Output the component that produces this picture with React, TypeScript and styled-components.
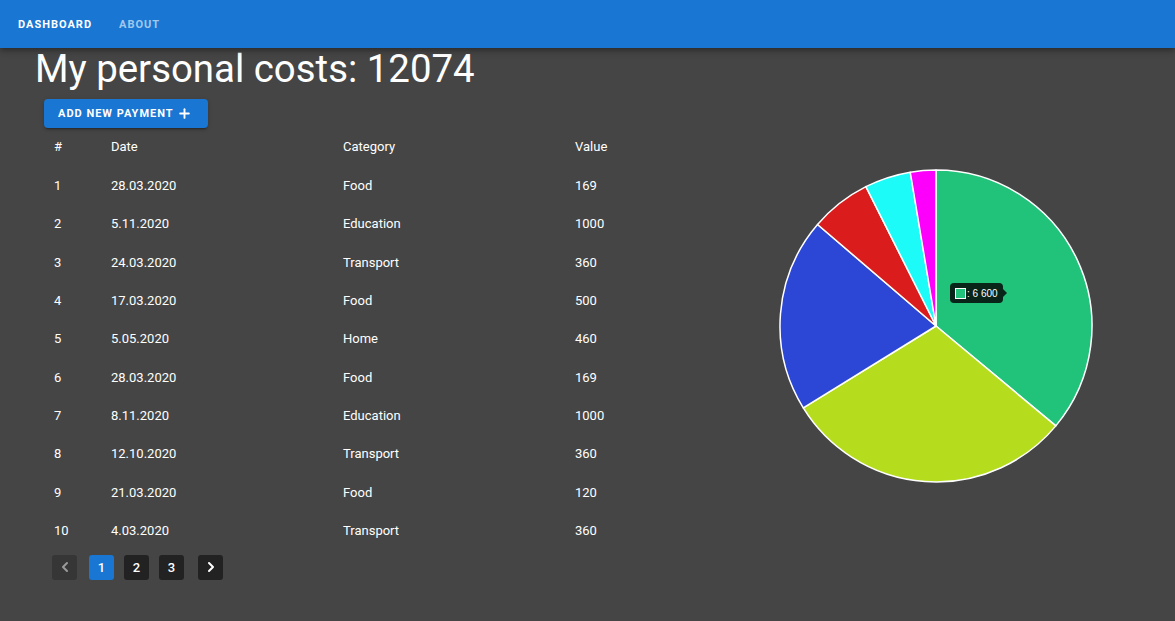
import React from "react";
import styled, { createGlobalStyle } from "styled-components";
import { ChevronLeft, ChevronRight, Plus } from "lucide-react";

const rows = [
  { id: 1, date: "28.03.2020", category: "Food", value: 169 },
  { id: 2, date: "5.11.2020", category: "Education", value: 1000 },
  { id: 3, date: "24.03.2020", category: "Transport", value: 360 },
  { id: 4, date: "17.03.2020", category: "Food", value: 500 },
  { id: 5, date: "5.05.2020", category: "Home", value: 460 },
  { id: 6, date: "28.03.2020", category: "Food", value: 169 },
  { id: 7, date: "8.11.2020", category: "Education", value: 1000 },
  { id: 8, date: "12.10.2020", category: "Transport", value: 360 },
  { id: 9, date: "21.03.2020", category: "Food", value: 120 },
  { id: 10, date: "4.03.2020", category: "Transport", value: 360 },
];

const slices = [
  { value: 6600, color: "#21c27a" },
  { value: 5517, color: "#b5dd1e" },
  { value: 3676, color: "#2c47d6" },
  { value: 1154, color: "#da1c1c" },
  { value: 875, color: "#1cfbf8" },
  { value: 483, color: "#fc00fc" },
];

const GlobalStyle = createGlobalStyle`
  body {
    margin: 0;
    background: #454545;
    font-family: Roboto, "Liberation Sans", sans-serif;
    color: #fff;
  }
`;

const Page = styled.div`
  min-height: 621px;
  background: #454545;
`;

const AppBar = styled.header`
  height: 48px;
  background: #1976d2;
  display: flex;
  align-items: center;
  padding-left: 18px;
  gap: 27px;
  box-shadow: 0 2px 4px -1px rgba(0, 0, 0, 0.2), 0 4px 5px 0 rgba(0, 0, 0, 0.14),
    0 1px 10px 0 rgba(0, 0, 0, 0.12);
  position: relative;
  z-index: 1;
`;

const Tab = styled.div<{ active?: boolean }>`
  font-size: 11px;
  font-weight: 700;
  letter-spacing: 1px;
  text-transform: uppercase;
  color: ${(p) => (p.active ? "#fff" : "rgba(255,255,255,0.6)")};
`;

const Main = styled.main`
  padding: 0 0 0 35px;
`;

const Title = styled.h1`
  margin: -1px 0 1px;
  font-size: 38.4px;
  font-weight: 400;
  line-height: 44px;
  color: #fff;
`;

const AddButton = styled.button`
  margin: 7px 0 0 9px;
  height: 29px;
  padding: 0 16px 0 14px;
  border: none;
  border-radius: 4px;
  background: #1976d2;
  color: #fff;
  font-family: inherit;
  font-size: 11px;
  font-weight: 700;
  letter-spacing: 1px;
  display: inline-flex;
  align-items: center;
  gap: 3px;
  box-shadow: 0 3px 1px -2px rgba(0, 0, 0, 0.2), 0 2px 2px 0 rgba(0, 0, 0, 0.14),
    0 1px 5px 0 rgba(0, 0, 0, 0.12);
`;

const Content = styled.div`
  display: flex;
`;

const TableBlock = styled.div`
  width: 620px;
  padding-left: 9px;
`;

const Row = styled.div<{ head?: boolean }>`
  display: grid;
  grid-template-columns: 57px 232px 232px 1fr;
  align-items: center;
  height: 38.33px;
  padding-left: 10px;
  padding-bottom: ${(p) => (p.head ? "2px" : "0")};
  box-sizing: border-box;
  font-size: 13px;
  font-weight: 400;
  color: #fff;
`;

const Pager = styled.div`
  display: flex;
  align-items: center;
  gap: 10px;
  margin: 5px 0 0 8px;
`;

const PageBtn = styled.div<{ active?: boolean; disabled?: boolean; arrow?: "prev" | "next" }>`
  width: 25px;
  height: 25px;
  border-radius: 3px;
  display: flex;
  align-items: center;
  justify-content: center;
  font-size: 13px;
  font-weight: 500;
  margin: ${(p) =>
    p.arrow === "prev" ? "0 2px 0 0" : p.arrow === "next" ? "0 0 0 4px" : "0"};
  color: ${(p) => (p.disabled ? "#9a9a9a" : "#fff")};
  background: ${(p) =>
    p.active ? "#1976d2" : p.disabled ? "#363636" : "#222222"};
`;

const ChartBlock = styled.div`
  position: relative;
  margin: 40px 0 0 114px;
  width: 316px;
  height: 316px;
`;

const Tooltip = styled.div`
  position: absolute;
  left: 172px;
  top: 115px;
  height: 20px;
  padding: 0 5px;
  border-radius: 4px;
  background: #092418;
  display: flex;
  align-items: center;
  gap: 1px;
  font-family: "Liberation Sans", Arial, sans-serif;
  font-size: 10px;
  color: #fff;

  &::after {
    content: "";
    position: absolute;
    right: -4px;
    top: 6px;
    border-top: 4px solid transparent;
    border-bottom: 4px solid transparent;
    border-left: 4px solid #092418;
  }
`;

const Swatch = styled.span`
  width: 9px;
  height: 9px;
  background: #21c27a;
  border: 1px solid #fff;
`;

const Pie = () => {
  const total = slices.reduce((s, x) => s + x.value, 0);
  const cx = 158;
  const cy = 158;
  const r = 156;
  let acc = 0;
  return (
    <svg width="316" height="316" viewBox="0 0 316 316">
      {slices.map((s, i) => {
        const a0 = (acc / total) * Math.PI * 2;
        acc += s.value;
        const a1 = (acc / total) * Math.PI * 2;
        const x0 = cx + r * Math.sin(a0);
        const y0 = cy - r * Math.cos(a0);
        const x1 = cx + r * Math.sin(a1);
        const y1 = cy - r * Math.cos(a1);
        const large = a1 - a0 > Math.PI ? 1 : 0;
        return (
          <path
            key={i}
            d={`M${cx} ${cy} L${x0} ${y0} A${r} ${r} 0 ${large} 1 ${x1} ${y1} Z`}
            fill={s.color}
            stroke="#fff"
            strokeWidth="1.5"
            strokeLinejoin="round"
          />
        );
      })}
    </svg>
  );
};

export default function App() {
  return (
    <Page>
      <GlobalStyle />
      <AppBar>
        <Tab active>Dashboard</Tab>
        <Tab>About</Tab>
      </AppBar>
      <Main>
        <Title>My personal costs: 12074</Title>
        <AddButton>
          ADD NEW PAYMENT <Plus size={15} strokeWidth={3} />
        </AddButton>
        <Content>
          <TableBlock>
            <Row head>
              <span>#</span>
              <span>Date</span>
              <span>Category</span>
              <span>Value</span>
            </Row>
            {rows.map((r) => (
              <Row key={r.id}>
                <span>{r.id}</span>
                <span>{r.date}</span>
                <span>{r.category}</span>
                <span>{r.value}</span>
              </Row>
            ))}
            <Pager>
              <PageBtn disabled arrow="prev">
                <ChevronLeft size={16} strokeWidth={3} />
              </PageBtn>
              <PageBtn active>1</PageBtn>
              <PageBtn>2</PageBtn>
              <PageBtn>3</PageBtn>
              <PageBtn arrow="next">
                <ChevronRight size={16} strokeWidth={3} />
              </PageBtn>
            </Pager>
          </TableBlock>
          <ChartBlock>
            <Pie />
            <Tooltip>
              <Swatch />
              : 6 600
            </Tooltip>
          </ChartBlock>
        </Content>
      </Main>
    </Page>
  );
}
